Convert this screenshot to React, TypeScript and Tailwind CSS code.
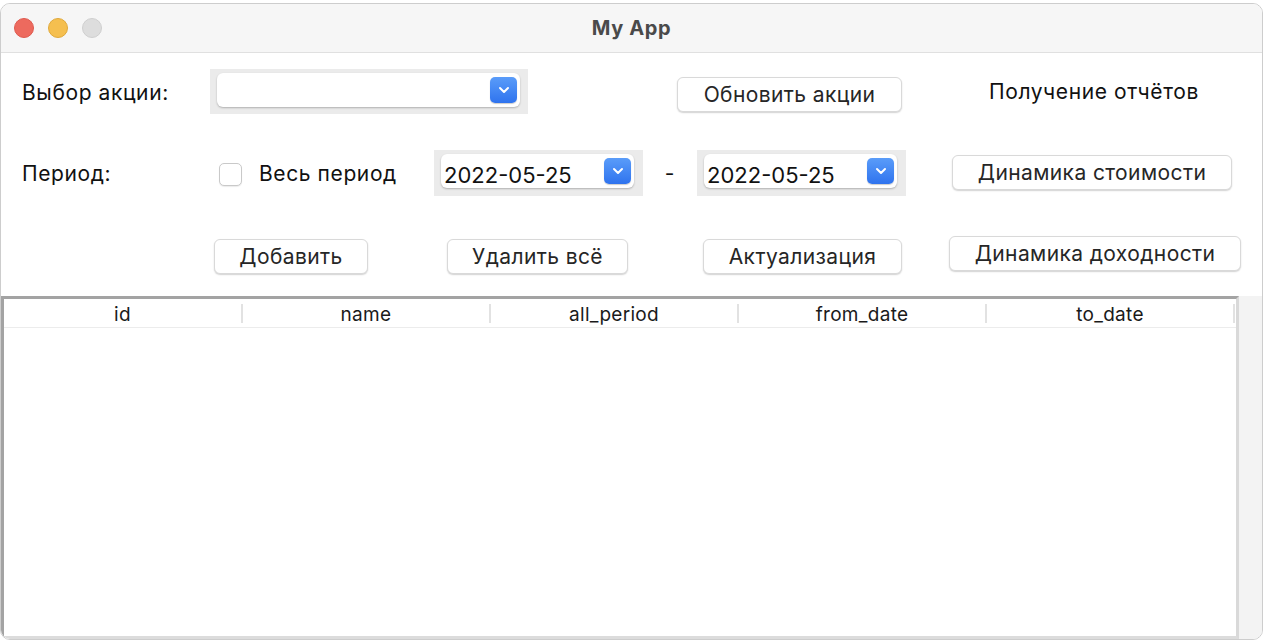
import type { ReactNode } from 'react'

const FONT = { fontFamily: 'Inter, "Liberation Sans", sans-serif' }

const COLUMNS = [
  { key: 'id', width: 'w-[239px]' },
  { key: 'name', width: 'w-[248px]' },
  { key: 'all_period', width: 'w-[248px]' },
  { key: 'from_date', width: 'w-[248px]' },
  { key: 'to_date', width: 'w-[248px]' },
]

function Chevron() {
  return (
    <svg width="12" height="8" viewBox="0 0 12 8" fill="none">
      <path d="M2 2l4 4 4-4" stroke="white" strokeWidth="2" strokeLinecap="round" strokeLinejoin="round" />
    </svg>
  )
}

function BlueArrow() {
  return (
    <div className="flex h-[26px] w-[27px] shrink-0 items-center justify-center rounded-[5px] bg-gradient-to-b from-[#5a9cf9] to-[#2f73ee] shadow-[0_1px_1px_rgba(0,0,0,0.2)]">
      <Chevron />
    </div>
  )
}

function MacButton({ width, children }: { width: string; children: ReactNode }) {
  return (
    <button
      type="button"
      className={`${width} h-[35px] shrink-0 rounded-[6px] border border-[#d9d9d9] bg-white pt-[1px] text-[21px] tracking-[0.4px] text-[#262626] shadow-[0_1px_1.5px_rgba(0,0,0,0.18)]`}
    >
      {children}
    </button>
  )
}

function DateCombo({ value }: { value: string }) {
  return (
    <div className="h-[46px] w-[209px] shrink-0 bg-[#ebebeb] pl-[7px] pr-[9px] pt-[4px]">
      <div className="flex h-[34px] items-center justify-between rounded-[6px] bg-white pl-[3px] pr-[3px] shadow-[0_1px_2px_rgba(0,0,0,0.25)]">
        <span className="pt-[7px] text-[22px] leading-[28px] text-[#111]">{value}</span>
        <BlueArrow />
      </div>
    </div>
  )
}

const TEXT = 'text-[21px] leading-[28px] tracking-[0.6px] text-[#111]'

export default function App() {
  return (
    <div className="h-[644px] w-[1264px] overflow-hidden bg-white pt-[3px]" style={FONT}>
      <div className="flex h-[637px] w-[1263px] flex-col overflow-hidden rounded-[10px] border border-[#cdcdcd] bg-white">
        {/* barra de título */}
        <div className="grid h-[49px] shrink-0 grid-cols-[1fr_auto_1fr] items-center border-b border-[#e0e0e0] bg-[#f6f6f6]">
          <div className="flex items-center gap-[14px] pl-[13px]">
            <span className="h-[20px] w-[20px] rounded-full border border-[#df5a4f] bg-[#ed6a5e]" />
            <span className="h-[20px] w-[20px] rounded-full border border-[#e0a93b] bg-[#f5bf4f]" />
            <span className="h-[20px] w-[20px] rounded-full border border-[#cfcfcf] bg-[#dddddd]" />
          </div>
          <div className="text-[20px] font-bold tracking-[0.6px] text-[#4a4a4a]">My App</div>
          <div />
        </div>

        {/* fila 1 */}
        <div className="mt-[16px] flex h-[45px] shrink-0 items-start">
          <div className={`mt-[10px] w-[209px] shrink-0 pl-[21px] ${TEXT}`}>Выбор акции:</div>
          <div className="h-[45px] w-[318px] shrink-0 bg-[#ebebeb] pl-[7px] pr-[8px] pt-[4px]">
            <div className="flex h-[34px] items-center justify-end rounded-[6px] bg-white pr-[3px] shadow-[0_1px_2px_rgba(0,0,0,0.25)]">
              <BlueArrow />
            </div>
          </div>
          <div className="ml-[149px] mt-[8px]">
            <MacButton width="w-[225px]">Обновить акции</MacButton>
          </div>
          <div className={`ml-[87px] mt-[9px] ${TEXT}`}>Получение отчётов</div>
        </div>

        {/* fila 2 */}
        <div className="mt-[36px] flex h-[46px] shrink-0 items-start">
          <div className={`mt-[10px] w-[218px] shrink-0 pl-[21px] ${TEXT}`}>Период:</div>
          <div className="mt-[10px] flex w-[215px] shrink-0 items-center">
            <span className="h-[23px] w-[23px] shrink-0 rounded-[5px] border border-[#c9c9c9] bg-white shadow-[0_1px_1px_rgba(0,0,0,0.08)]" />
            <span className={`ml-[17px] ${TEXT}`}>Весь период</span>
          </div>
          <DateCombo value="2022-05-25" />
          <div className={`mt-[10px] w-[54px] shrink-0 text-center ${TEXT}`}>-</div>
          <DateCombo value="2022-05-25" />
          <div className="ml-[46px] mt-[5px]">
            <MacButton width="w-[280px]">Динамика стоимости</MacButton>
          </div>
        </div>

        {/* fila 3 */}
        <div className="mt-[40px] flex h-[38px] shrink-0 items-start">
          <div className="ml-[213px] mt-[3px]">
            <MacButton width="w-[154px]">Добавить</MacButton>
          </div>
          <div className="ml-[79px] mt-[3px]">
            <MacButton width="w-[181px]">Удалить всё</MacButton>
          </div>
          <div className="ml-[75px] mt-[3px]">
            <MacButton width="w-[199px]">Актуализация</MacButton>
          </div>
          <div className="ml-[47px]">
            <MacButton width="w-[292px]">Динамика доходности</MacButton>
          </div>
        </div>

        {/* tabla */}
        <div className="mt-[22px] flex min-h-0 flex-1">
          <div className="flex w-[1238px] shrink-0 flex-col border-[3px] border-b-[#dcdcdc] border-l-[#a3a3a3] border-r-[#d9d9d9] border-t-[#a3a3a3] bg-white">
            <div className="flex h-[29px] shrink-0 border-b border-[#ececec]">
              {COLUMNS.map((c) => (
                <div key={c.key} className={`${c.width} flex shrink-0 items-center`}>
                  <span className="flex-1 pt-[4px] text-center text-[19px] leading-[24px] tracking-[0.3px] text-[#1a1a1a]">
                    {c.key}
                  </span>
                  <span className="h-[19px] w-[2px] bg-[#e2e2e2]" />
                </div>
              ))}
            </div>
            <div className="flex-1" />
          </div>
          <div className="flex-1 bg-[#f3f3f3]" />
        </div>
      </div>
    </div>
  )
}
